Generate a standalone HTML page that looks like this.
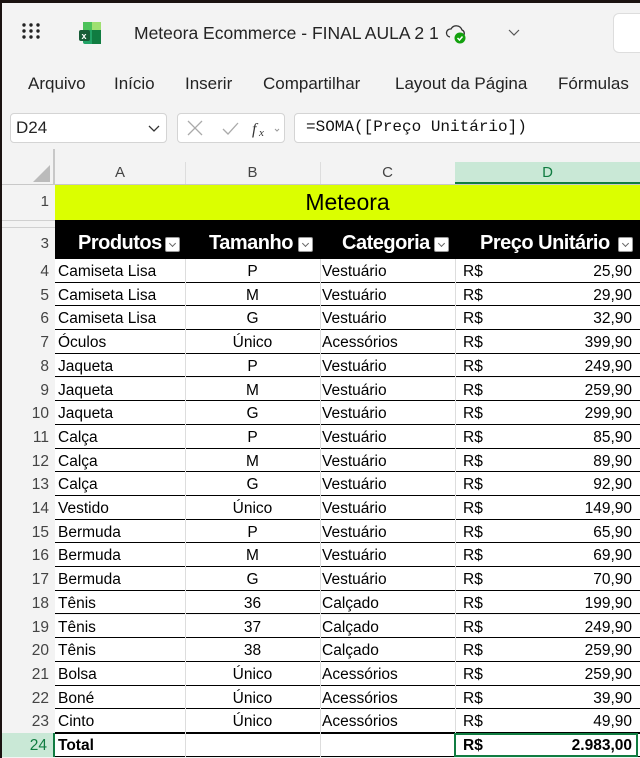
<!DOCTYPE html>
<html><head><meta charset="utf-8"><style>
*{margin:0;padding:0;box-sizing:border-box}
body{width:640px;height:758px;overflow:hidden;background:#f3f3f3;font-family:"Liberation Sans",sans-serif;position:relative}
.a{position:absolute}
.t{font-size:17px;color:#242424;white-space:nowrap}
.r{position:absolute;left:0;width:640px;height:23.7px;font-size:15.5px;color:#000}
.r div{position:absolute;top:0;height:100%;line-height:25px;white-space:nowrap}
.rh{left:0;width:55px;text-align:right;padding-right:6px;color:#444;background:#f3f3f3;font-size:15.5px}
.cells{position:absolute;left:55px;right:0;top:0;bottom:0;background:#fff;border-bottom:1px solid #000}
.dd{position:absolute;width:15px;height:15px;background:#fff;border:1px solid #999;border-radius:2px;top:10px}
.dd:after{content:"";position:absolute;left:4px;top:3px;width:4px;height:4px;border-right:1px solid #666;border-bottom:1px solid #666;transform:rotate(45deg)}
</style></head><body>
<svg class="a" style="left:22px;top:23px" width="20" height="16"><g fill="#222"><circle cx="2" cy="2" r="1.7"/><circle cx="9" cy="2" r="1.7"/><circle cx="16" cy="2" r="1.7"/><circle cx="2" cy="8" r="1.7"/><circle cx="9" cy="8" r="1.7"/><circle cx="16" cy="8" r="1.7"/><circle cx="2" cy="14" r="1.7"/><circle cx="9" cy="14" r="1.7"/><circle cx="16" cy="14" r="1.7"/></g></svg>
<svg class="a" style="left:78px;top:21px" width="24" height="24"><rect x="5" y="1" width="18" height="22" rx="2" fill="#21a366"/><rect x="14" y="1" width="9" height="8" fill="#9fe070"/><rect x="5" y="1" width="9" height="8" fill="#4cc25a"/><rect x="14" y="9" width="9" height="14" fill="#107c41"/><rect x="1" y="9" width="11" height="11" rx="2" fill="#185c37"/><text x="3.5" y="18" font-size="9" fill="#fff" font-family="Liberation Sans" font-weight="bold">x</text></svg>
<div class="a t" style="left:134px;top:23px;font-size:17.5px">Meteora Ecommerce - FINAL AULA 2 1</div>
<svg class="a" style="left:445px;top:23px" width="24" height="22"><path d="M5 14a4 4 0 0 1 1-8 6 6 0 0 1 11 1 3.5 3.5 0 0 1 1 6" fill="none" stroke="#333" stroke-width="1.3"/><circle cx="15" cy="15" r="5.5" fill="#13a10e"/><path d="M12.5 15l2 2 3-3.5" fill="none" stroke="#fff" stroke-width="1.5"/></svg>
<svg class="a" style="left:508px;top:29px" width="12" height="8"><path d="M1 1l5 5 5-5" fill="none" stroke="#555" stroke-width="1.2"/></svg>
<div class="a" style="left:613px;top:13px;width:40px;height:40px;background:#fff;border:1px solid #ddd;border-radius:6px"></div>
<div class="a t" style="left:28px;top:74px">Arquivo</div>
<div class="a t" style="left:114px;top:74px">Início</div>
<div class="a t" style="left:185px;top:74px">Inserir</div>
<div class="a t" style="left:263px;top:74px">Compartilhar</div>
<div class="a t" style="left:395px;top:74px">Layout da Página</div>
<div class="a t" style="left:558px;top:74px">Fórmulas</div>
<div class="a" style="left:10px;top:113px;width:157px;height:30px;background:#fff;border:1px solid #d4d4d4;border-radius:4px"></div>
<div class="a t" style="left:16px;top:118px;font-size:17px">D24</div>
<svg class="a" style="left:148px;top:125px" width="12" height="8"><path d="M1 1l5 5 5-5" fill="none" stroke="#333" stroke-width="1.3"/></svg>
<div class="a" style="left:177px;top:113px;width:108px;height:30px;background:#fff;border:1px solid #d4d4d4;border-radius:4px"></div>
<svg class="a" style="left:186px;top:119px" width="95" height="20"><path d="M2 2l14 14M16 2L2 16" stroke="#aaa" stroke-width="1.3"/><path d="M37 10l5 5 10-11" fill="none" stroke="#aaa" stroke-width="1.3"/><text x="66" y="15" font-size="16" font-style="italic" font-family="Liberation Serif" fill="#333">f</text><text x="73" y="17" font-size="11" font-style="italic" font-family="Liberation Serif" fill="#333">x</text><path d="M89 10l2 2 2-2" fill="none" stroke="#999"/></svg>
<div class="a" style="left:294px;top:113px;width:360px;height:30px;background:#fff;border:1px solid #d4d4d4;border-radius:4px"></div>
<div class="a" style="left:306px;top:118px;font-family:'Liberation Mono',monospace;font-size:16px;color:#111">=SOMA([Preço Unitário])</div>
<div class="a" style="left:53px;top:149px;width:2px;height:36px;background:#c8c8c8"></div>
<svg class="a" style="left:30px;top:163px" width="22" height="20"><path d="M20 2V19H3z" fill="#bbb"/></svg>
<div class="a" style="left:0;top:184px;width:640px;height:1px;background:#c8c8c8"></div>
<div class="a" style="left:455px;top:162px;width:185px;height:22px;background:#c9e8d6;border-bottom:2px solid #107c41"></div>
<div class="a" style="left:185px;top:162px;width:1px;height:22px;background:#ddd"></div>
<div class="a" style="left:320px;top:162px;width:1px;height:22px;background:#ddd"></div>
<div class="a" style="left:55px;top:164px;width:130px;text-align:center;font-size:15px;color:#444">A</div>
<div class="a" style="left:185px;top:164px;width:135px;text-align:center;font-size:15px;color:#444">B</div>
<div class="a" style="left:320px;top:164px;width:135px;text-align:center;font-size:15px;color:#444">C</div>
<div class="a" style="left:455px;top:164px;width:185px;text-align:center;font-size:15px;color:#107c41">D</div>
<div class="a" style="left:55px;top:185px;width:585px;height:35px;background:#dbff00"></div>
<div class="a" style="left:0;top:193px;width:49px;text-align:right;font-size:15px;color:#444">1</div>
<div class="a" style="left:55px;top:189px;width:585px;text-align:center;font-size:23px;color:#000">Meteora</div>
<div class="a" style="left:0;top:220px;width:55px;height:1px;background:#d0d0d0"></div>
<div class="a" style="left:0;top:227px;width:55px;height:1px;background:#d0d0d0"></div>
<div class="a" style="left:55px;top:220px;width:585px;height:39px;background:#000"></div>
<div class="a" style="left:0;top:235px;width:49px;text-align:right;font-size:15px;color:#444">3</div>
<div class="a" style="left:78px;top:232px;font-size:20px;font-weight:bold;color:#fff;letter-spacing:-0.5px">Produtos</div><div class="dd" style="left:165px;top:237px"></div>
<div class="a" style="left:209px;top:232px;font-size:20px;font-weight:bold;color:#fff;letter-spacing:-0.5px">Tamanho</div><div class="dd" style="left:298px;top:237px"></div>
<div class="a" style="left:342px;top:232px;font-size:20px;font-weight:bold;color:#fff;letter-spacing:-0.5px">Categoria</div><div class="dd" style="left:434px;top:237px"></div>
<div class="a" style="left:480px;top:232px;font-size:20px;font-weight:bold;color:#fff;letter-spacing:-0.5px">Preço Unitário</div><div class="dd" style="left:618px;top:237px"></div>
<div id="rows"></div>
<div class="a" style="left:0;top:0;width:640px;height:3px;background:#1a1210"></div>
<div class="a" style="left:0;top:0;width:2px;height:758px;background:#1a1210"></div>
<script>
(function(){
var d=[["Camiseta Lisa","P","Vestuário","25,90"],["Camiseta Lisa","M","Vestuário","29,90"],["Camiseta Lisa","G","Vestuário","32,90"],["Óculos","Único","Acessórios","399,90"],["Jaqueta","P","Vestuário","249,90"],["Jaqueta","M","Vestuário","259,90"],["Jaqueta","G","Vestuário","299,90"],["Calça","P","Vestuário","85,90"],["Calça","M","Vestuário","89,90"],["Calça","G","Vestuário","92,90"],["Vestido","Único","Vestuário","149,90"],["Bermuda","P","Vestuário","65,90"],["Bermuda","M","Vestuário","69,90"],["Bermuda","G","Vestuário","70,90"],["Tênis","36","Calçado","199,90"],["Tênis","37","Calçado","249,90"],["Tênis","38","Calçado","259,90"],["Bolsa","Único","Acessórios","259,90"],["Boné","Único","Acessórios","39,90"],["Cinto","Único","Acessórios","49,90"]];
var h="";
for(var i=0;i<=20;i++){var y=259+i*23.7,n=i+4,last=i==20,r=d[i]||["Total","","","2.983,00"];
var fw=last?"font-weight:bold;":"";
h+='<div class="r" style="top:'+y.toFixed(1)+'px">'+
'<div class="rh" style="'+(last?'background:#c9e8d6;color:#107c41;border-right:2px solid #107c41':'')+'">'+n+'</div>'+
'<div class="cells" style="'+(last?'border-top:1px solid #000;':'')+'"></div>'+
'<div style="left:185px;width:1px;background:#ddd"></div><div style="left:320px;width:1px;background:#ddd"></div><div style="left:455px;width:1px;background:#ddd"></div>'+
'<div style="left:58px;'+fw+'">'+r[0]+'</div>'+
'<div style="left:185px;width:135px;text-align:center">'+r[1]+'</div>'+
'<div style="left:322px">'+r[2]+'</div>'+
'<div style="left:463px;'+fw+'">R$</div>'+
'<div style="left:455px;width:177px;text-align:right;'+fw+'">'+r[3]+'</div>'+
(last?'<div style="left:454px;width:184px;border:2px solid #107c41"></div>':'')+
'</div>';}
document.getElementById("rows").innerHTML=h;
})();
</script>
</body></html>
